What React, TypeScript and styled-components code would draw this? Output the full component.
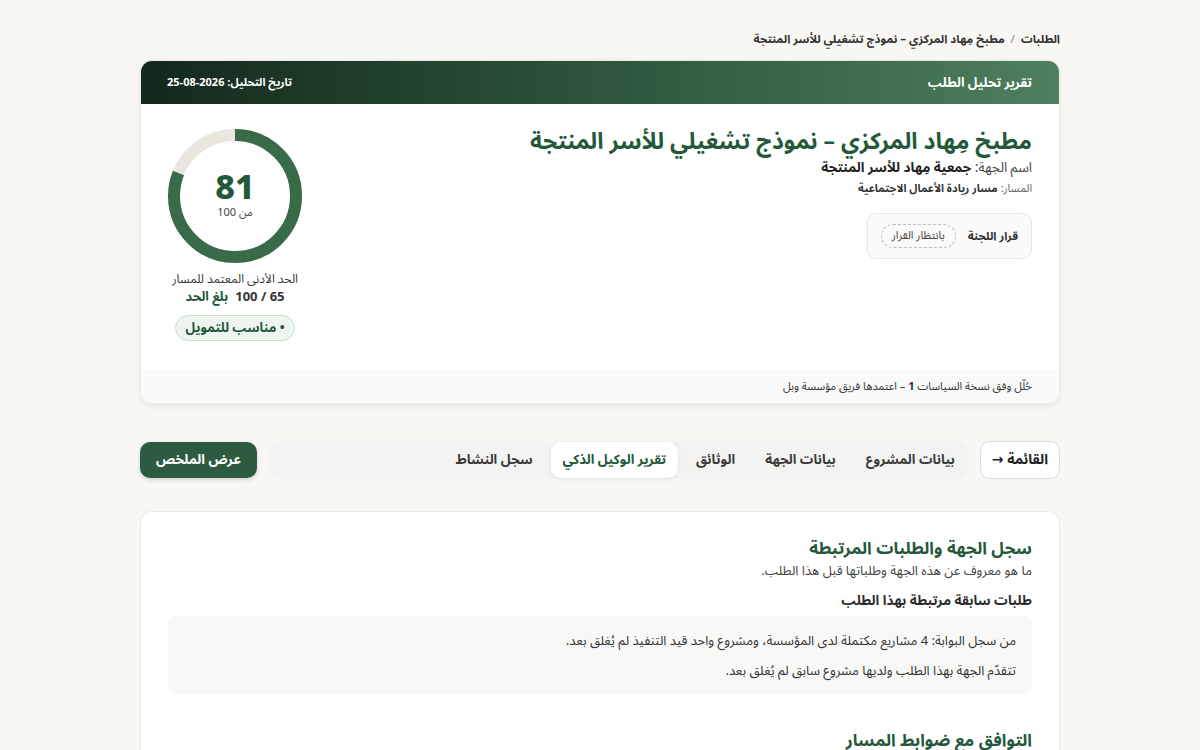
import React from "react";
import styled, { createGlobalStyle } from "styled-components";

const GlobalStyle = createGlobalStyle`
  html, body { margin: 0; padding: 0; }
  body {
    background: #f9f7f3;
    font-family: "Noto Sans Arabic", "Noto Naskh Arabic", "DejaVu Sans", sans-serif;
    color: #2b2b2b;
  }
  * { box-sizing: border-box; }
`;

const Page = styled.div`
  width: 920px;
  margin: 0 auto;
  padding: 30px 0 40px;
  direction: rtl;
`;

const Breadcrumb = styled.div`
  display: flex;
  gap: 6px;
  font-size: 11.5px;
  line-height: 18px;
  font-weight: 700;
  color: #333;
  margin-bottom: 12px;
`;

const Sep = styled.span`
  color: #888;
  font-weight: 400;
`;

const Card = styled.section`
  background: #fff;
  border-radius: 12px;
  border: 1px solid #ebe8e2;
  box-shadow: 0 2px 6px rgba(0, 0, 0, 0.08);
  overflow: hidden;
`;

const CardHeader = styled.header`
  height: 43px;
  display: flex;
  align-items: center;
  justify-content: space-between;
  padding: 0 27px 0 26px;
  background: linear-gradient(to left, #4e7f5e 0%, #2f5a3f 45%, #14281b 100%);
  color: #fff;
`;

const HeaderTitle = styled.div`
  font-size: 13px;
  line-height: 18px;
  font-weight: 700;
`;

const HeaderDate = styled.div`
  font-size: 11px;
  line-height: 16px;
  font-weight: 700;
`;

const CardBody = styled.div`
  display: flex;
  justify-content: space-between;
  padding: 21px 27px 0 27px;
  height: 266px;
`;

const Info = styled.div`
  display: flex;
  flex-direction: column;
  align-items: flex-start;
`;

const Title = styled.h1`
  margin: 0;
  font-size: 23px;
  font-weight: 700;
  color: #24583a;
  line-height: 34px;
`;

const OrgLine = styled.div`
  font-size: 13.5px;
  color: #444;
  line-height: 18px;
  b { color: #222; }
`;

const TrackLine = styled.div`
  margin-top: 3px;
  font-size: 11px;
  color: #666;
  line-height: 18px;
  b { color: #333; }
`;

const DecisionBox = styled.div`
  margin-top: 15px;
  height: 46px;
  display: flex;
  align-items: center;
  gap: 12px;
  padding: 0 13px;
  border: 1px solid #e6e6e6;
  background: #fafafa;
  border-radius: 9px;
`;

const DecisionLabel = styled.span`
  font-size: 11.5px;
  line-height: 16px;
  font-weight: 700;
  color: #333;
`;

const DashedPill = styled.span`
  font-size: 11px;
  line-height: 16px;
  color: #444;
  border: 1px dashed #bdbdbd;
  border-radius: 999px;
  padding: 3px 10px;
`;

const ScoreCol = styled.div`
  width: 134px;
  display: flex;
  flex-direction: column;
  align-items: center;
`;

const Ring = styled.div`
  position: relative;
  width: 134px;
  height: 134px;
  margin-top: 4px;
`;

const RingCenter = styled.div`
  position: absolute;
  inset: 0;
  display: flex;
  flex-direction: column;
  align-items: center;
  justify-content: center;
`;

const Score = styled.div`
  font-size: 34px;
  font-weight: 800;
  color: #24583a;
  line-height: 34px;
`;

const OutOf = styled.div`
  font-size: 11px;
  line-height: 16px;
  color: #444;
`;

const MinLabel = styled.div`
  margin-top: 9px;
  font-size: 12px;
  line-height: 16px;
  color: #333;
  white-space: nowrap;
`;

const MinValue = styled.div`
  font-size: 13px;
  line-height: 18px;
  font-weight: 700;
  color: #333;
  white-space: nowrap;
  span { color: #24583a; margin-right: 7px; }
`;

const FundPill = styled.div`
  margin-top: 9px;
  height: 26px;
  display: flex;
  align-items: center;
  font-size: 13px;
  line-height: 18px;
  font-weight: 700;
  color: #24583a;
  background: #eef4ee;
  border: 1px solid #cfdccf;
  border-radius: 999px;
  padding: 0 9px;
  white-space: nowrap;
`;

const CardFooter = styled.div`
  height: 33px;
  display: flex;
  align-items: center;
  padding: 0 27px;
  background: #fafafa;
  font-size: 11px;
  line-height: 16px;
  color: #333;
  b { font-weight: 700; }
`;

const TabsRow = styled.div`
  margin-top: 37px;
  display: flex;
  align-items: center;
  gap: 12px;
`;

const BackButton = styled.button`
  font-family: inherit;
  height: 38px;
  padding: 0 11px;
  border-radius: 10px;
  border: 1px solid #dcdcdc;
  background: #fff;
  font-size: 14px;
  line-height: 20px;
  font-weight: 700;
  color: #222;
`;

const TabGroup = styled.div`
  flex: 1;
  display: flex;
  align-items: center;
  gap: 6px;
  background: #f3f3f1;
  border-radius: 12px;
  height: 38px;
  padding: 0 1px;
`;

const Tab = styled.button<{ $active?: boolean }>`
  font-family: inherit;
  height: 36px;
  padding: 0 12px;
  border: none;
  border-radius: 10px;
  font-size: 13.3px;
  line-height: 20px;
  font-weight: 700;
  background: ${(p) => (p.$active ? "#fff" : "transparent")};
  color: ${(p) => (p.$active ? "#24583a" : "#3a3a3a")};
  box-shadow: ${(p) => (p.$active ? "0 1px 4px rgba(0,0,0,0.08)" : "none")};
`;

const SummaryButton = styled.button`
  font-family: inherit;
  height: 36px;
  padding: 0 16px;
  border: none;
  border-radius: 10px;
  background: #2d5b3f;
  color: #fff;
  font-size: 13.5px;
  line-height: 20px;
  font-weight: 700;
  box-shadow: 0 2px 4px rgba(0, 0, 0, 0.15);
`;

const Panel = styled.section`
  margin-top: 32px;
  background: #fff;
  border: 1px solid #ebe8e2;
  border-radius: 12px;
  padding: 24px 27px 20px;
`;

const SectionTitle = styled.h2<{ $gap?: number }>`
  margin: ${(p) => p.$gap ?? 0}px 0 0;
  font-size: 17px;
  font-weight: 700;
  color: #24583a;
  line-height: 26px;
`;

const SectionSub = styled.p`
  margin: 0;
  font-size: 13px;
  color: #444;
  line-height: 18px;
`;

const SubHeading = styled.h3`
  margin: 11px 0 5px;
  font-size: 13.5px;
  font-weight: 700;
  color: #2b2b2b;
  line-height: 20px;
`;

const NoteBox = styled.div`
  background: #f8f8f7;
  border-radius: 8px;
  padding: 15px 16px 14px;
  display: flex;
  flex-direction: column;
  gap: 10px;
`;

const NoteLine = styled.p`
  margin: 0;
  font-size: 13px;
  color: #333;
  line-height: 20px;
`;

function ScoreRing({ value }: { value: number }) {
  const r = 61;
  const c = 2 * Math.PI * r;
  const len = (value / 100) * c;
  return (
    <svg width="134" height="134" viewBox="0 0 134 134">
      <circle cx="67" cy="67" r={r} fill="none" stroke="#e9e6df" strokeWidth="12" />
      <circle
        cx="67"
        cy="67"
        r={r}
        fill="none"
        stroke="#3a6b48"
        strokeWidth="12"
        strokeDasharray={`${len} ${c}`}
        transform="rotate(-90 67 67)"
      />
    </svg>
  );
}

export default function App() {
  return (
    <>
      <GlobalStyle />
      <Page>
        <Breadcrumb>
          <span>الطلبات</span>
          <Sep>/</Sep>
          <span>مطبخ مِهاد المركزي – نموذج تشغيلي للأسر المنتجة</span>
        </Breadcrumb>

        <Card>
          <CardHeader>
            <HeaderTitle>تقرير تحليل الطلب</HeaderTitle>
            <HeaderDate>تاريخ التحليل: 2026-08-25</HeaderDate>
          </CardHeader>
          <CardBody>
            <Info>
              <Title>مطبخ مِهاد المركزي – نموذج تشغيلي للأسر المنتجة</Title>
              <OrgLine>
                اسم الجهة: <b>جمعية مِهاد للأسر المنتجة</b>
              </OrgLine>
              <TrackLine>
                المسار: <b>مسار ريادة الأعمال الاجتماعية</b>
              </TrackLine>
              <DecisionBox>
                <DecisionLabel>قرار اللجنة</DecisionLabel>
                <DashedPill>بانتظار القرار</DashedPill>
              </DecisionBox>
            </Info>
            <ScoreCol>
              <Ring>
                <ScoreRing value={81} />
                <RingCenter>
                  <Score>81</Score>
                  <OutOf>من 100</OutOf>
                </RingCenter>
              </Ring>
              <MinLabel>الحد الأدنى المعتمد للمسار</MinLabel>
              <MinValue>
                65 / 100<span>بلغ الحد</span>
              </MinValue>
              <FundPill>• مناسب للتمويل</FundPill>
            </ScoreCol>
          </CardBody>
          <CardFooter>
            <span>
              حُلّل وفق نسخة السياسات <b>1</b> – اعتمدها فريق مؤسسة وبل
            </span>
          </CardFooter>
        </Card>

        <TabsRow>
          <BackButton>القائمة →</BackButton>
          <TabGroup>
            <Tab>بيانات المشروع</Tab>
            <Tab>بيانات الجهة</Tab>
            <Tab>الوثائق</Tab>
            <Tab $active>تقرير الوكيل الذكي</Tab>
            <Tab>سجل النشاط</Tab>
          </TabGroup>
          <SummaryButton>عرض الملخص</SummaryButton>
        </TabsRow>

        <Panel>
          <SectionTitle>سجل الجهة والطلبات المرتبطة</SectionTitle>
          <SectionSub>ما هو معروف عن هذه الجهة وطلباتها قبل هذا الطلب.</SectionSub>
          <SubHeading>طلبات سابقة مرتبطة بهذا الطلب</SubHeading>
          <NoteBox>
            <NoteLine>من سجل البوابة: 4 مشاريع مكتملة لدى المؤسسة، ومشروع واحد قيد التنفيذ لم يُغلق بعد.</NoteLine>
            <NoteLine>تتقدّم الجهة بهذا الطلب ولديها مشروع سابق لم يُغلق بعد.</NoteLine>
          </NoteBox>
          <SectionTitle $gap={33}>التوافق مع ضوابط المسار</SectionTitle>
        </Panel>
      </Page>
    </>
  );
}
